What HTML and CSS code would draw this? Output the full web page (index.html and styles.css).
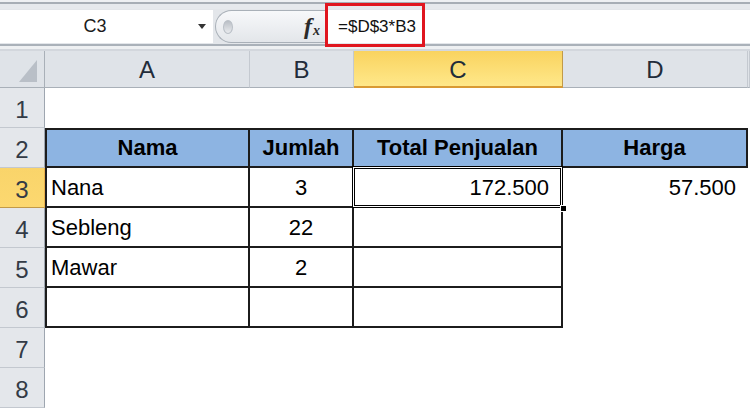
FILE: index.html
```html
<!DOCTYPE html>
<html>
<head>
<meta charset="utf-8">
<link rel="stylesheet" href="styles.css">
</head>
<body>
<div class="app">
  <div class="topstrip"></div>
  <div class="fbar">
    <div class="namebox"><span class="name">C3</span><span class="arrow"></span></div>
    <div class="fxzone">
      <div class="capsule"><span class="knob"></span><span class="fx"><span class="fx-f">f</span><span class="fx-x">x</span></span></div>
    </div>
    <div class="formula"><span class="ftext">=$D$3*B3</span></div>
    <div class="redbox"></div>
  </div>
  <div class="sep"></div>
  <div class="sheet">
    <div class="corner"></div><div class="ch">A</div><div class="ch">B</div><div class="ch sel">C</div><div class="ch">D</div><div class="ch"></div>

    <div class="rh">1</div><div></div><div></div><div></div><div></div><div></div>

    <div class="rh">2</div><div class="hd t tl tt">Nama</div><div class="hd t tt">Jumlah</div><div class="hd t tt">Total Penjualan</div><div class="hd t tt">Harga</div><div></div>

    <div class="rh sel">3</div><div class="t tl left">Nana</div><div class="t center">3</div><div class="t right cur">172.500</div><div class="right">57.500</div><div></div>

    <div class="rh">4</div><div class="t tl left">Sebleng</div><div class="t center">22</div><div class="t"></div><div></div><div></div>

    <div class="rh">5</div><div class="t tl left">Mawar</div><div class="t center">2</div><div class="t"></div><div></div><div></div>

    <div class="rh">6</div><div class="t tl"></div><div class="t"></div><div class="t"></div><div></div><div></div>

    <div class="rh">7</div><div></div><div></div><div></div><div></div><div></div>

    <div class="rh">8</div><div></div><div></div><div></div><div></div><div></div>
  </div>
</div>
</body>
</html>
```

FILE: styles.css
```css
html, body {
  margin: 0;
  padding: 0;
}

body {
  font-family: "Liberation Sans", Arial, sans-serif;
  color: #000;
}

.app {
  width: 750px;
  height: 408px;
  overflow: hidden;
  background: #fff;
  position: relative;
}

.topstrip {
  height: 9px;
  background: linear-gradient(#eef0f3 0 2px, #a7aeb6 2px 4px, #e6e9ed 4px);
}

.fbar {
  height: 35px;
  box-sizing: border-box;
  padding: 1px 0;
  display: flex;
  background: #e3e6ea;
  position: relative;
}

.namebox {
  width: 213px;
  background: #fff;
  display: flex;
  align-items: center;
}

.name {
  width: 190px;
  text-align: center;
  font-size: 18px;
  color: #1b1b1b;
}

.arrow {
  width: 0;
  height: 0;
  margin-left: 8px;
  border-left: 4px solid transparent;
  border-right: 4px solid transparent;
  border-top: 5px solid #333;
}

.fxzone {
  width: 112px;
  padding-left: 2px;
  box-sizing: border-box;
  display: flex;
}

.capsule {
  flex: 1;
  display: flex;
  align-items: center;
  padding-left: 7px;
  border: 1px solid #a9b0b8;
  border-right: none;
  border-radius: 17px 0 0 17px;
  background: linear-gradient(#f7f8fa, #e3e6ea);
}

.knob {
  width: 10px;
  height: 14px;
  border-radius: 50%;
  background: linear-gradient(#b9bec5, #e9ebee);
  border: 1px solid #b9bfc6;
  box-sizing: border-box;
}

.fx {
  margin-left: auto;
  margin-right: 5px;
  font-family: "Liberation Serif", serif;
  font-style: italic;
  font-weight: bold;
  color: #2a2a2a;
  display: flex;
  align-items: baseline;
}

.fx-f {
  font-size: 24px;
  padding-right: 1px;
}

.fx-x {
  font-size: 14px;
  position: relative;
  top: 1px;
}

.formula {
  flex: 1;
  background: #fff;
  display: flex;
  align-items: center;
  padding-left: 13px;
  font-size: 17px;
  color: #111;
}

.redbox {
  position: absolute;
  left: 325px;
  top: -6px;
  width: 100px;
  height: 44px;
  box-sizing: border-box;
  border: 3px solid #e0161f;
}

.sep {
  height: 7px;
  background: linear-gradient(#aab1b9 0 2px, #eef0f2 2px 5px, #d3d7dd 5px);
}

.sheet {
  display: grid;
  grid-template-columns: 45px 205px 104px 209px 185px 1fr;
  grid-template-rows: 37px repeat(8, 40px);
}

.sheet > div {
  box-sizing: border-box;
  display: flex;
  align-items: center;
  font-size: 22px;
  white-space: nowrap;
  overflow: hidden;
}

.corner {
  background: #dfe3e8;
  border-right: 1px solid #a9b0b8;
  border-bottom: 1px solid #a9b0b8;
  position: relative;
}

.corner::after {
  content: "";
  position: absolute;
  right: 7px;
  bottom: 5px;
  width: 0;
  height: 0;
  border-left: 18px solid transparent;
  border-bottom: 22px solid #b9bfc7;
}

.sheet > .ch {
  background: #dfe3e8;
  border-right: 1px solid #c4c9d0;
  border-bottom: 1px solid #a9b0b8;
  justify-content: center;
  color: #222c3a;
  font-size: 24px;
  padding-top: 2px;
}

.sheet > .ch.sel {
  background: linear-gradient(#f9d35f, #ffe88a);
  border-right-color: #c29a48;
  border-bottom: 2px solid #d99a34;
}

.sheet > .rh {
  background: #e4e7eb;
  border-right: 1px solid #9ea6b0;
  border-bottom: 1px solid #c3c8cf;
  justify-content: center;
  color: #333b46;
  font-size: 24px;
  padding-top: 4px;
}

.sheet > .rh.sel {
  background: linear-gradient(#f9d46a, #fcd870);
  border-right: 1px solid #e8b04c;
  border-bottom: 1px solid #c29a48;
}

.t {
  border-right: 2px solid #1c1c1c;
  border-bottom: 2px solid #1c1c1c;
  padding-top: 2px;
}

.tl {
  border-left: 2px solid #1c1c1c;
}

.tt {
  border-top: 2px solid #1c1c1c;
  padding-top: 0;
}

.hd {
  background: #8db4e2;
  font-weight: bold;
  justify-content: center;
}

.left {
  padding-left: 4px;
}

.center {
  justify-content: center;
}

.right {
  justify-content: flex-end;
  padding-right: 12px;
}

.sheet > .cur {
  position: relative;
  overflow: visible;
  z-index: 2;
}

.cur::after {
  content: "";
  position: absolute;
  left: -2px;
  top: -2px;
  right: -2px;
  bottom: -2px;
  border: 1px solid #000;
  box-shadow: inset 0 0 0 1px #fff, inset 0 0 0 2px #000;
}

.cur::before {
  content: "";
  position: absolute;
  right: -6px;
  bottom: -6px;
  width: 5px;
  height: 5px;
  background: #000;
  border: 1px solid #fff;
  z-index: 3;
}
```
